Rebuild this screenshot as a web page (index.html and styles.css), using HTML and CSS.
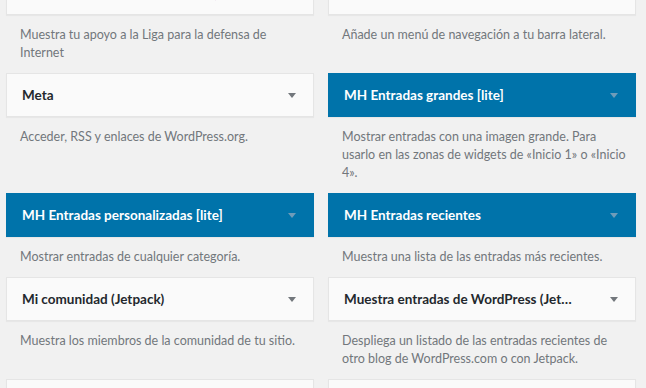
FILE: index.html
```html
<!doctype html>
<html>
	<head>
		<meta charset="utf-8">
		<link rel="stylesheet" href="styles.css">
	</head>
	<body>
		<div id="widget-list">
			<div class="widget">
				<div class="widget-top">
					<h3 class="widget-title">Liga para la defensa de Internet (Jetpack)</h3>
					<span class="widget-arrow"></span>
				</div>
				<p class="widget-description">Muestra tu apoyo a la Liga para la defensa de Internet</p>
			</div>
			<div class="widget">
				<div class="widget-top">
					<h3 class="widget-title">Menú de navegación</h3>
					<span class="widget-arrow"></span>
				</div>
				<p class="widget-description">Añade un menú de navegación a tu barra lateral.</p>
			</div>
			<div class="widget">
				<div class="widget-top">
					<h3 class="widget-title">Meta</h3>
					<span class="widget-arrow"></span>
				</div>
				<p class="widget-description">Acceder, RSS y enlaces de WordPress.org.</p>
			</div>
			<div class="widget">
				<div class="widget-top theme">
					<h3 class="widget-title">MH Entradas grandes [lite]</h3>
					<span class="widget-arrow"></span>
				</div>
				<p class="widget-description">Mostrar entradas con una imagen grande. Para usarlo en las zonas de widgets de «Inicio 1» o «Inicio 4».</p>
			</div>
			<div class="widget">
				<div class="widget-top theme">
					<h3 class="widget-title">MH Entradas personalizadas [lite]</h3>
					<span class="widget-arrow"></span>
				</div>
				<p class="widget-description">Mostrar entradas de cualquier categoría.</p>
			</div>
			<div class="widget">
				<div class="widget-top theme">
					<h3 class="widget-title">MH Entradas recientes</h3>
					<span class="widget-arrow"></span>
				</div>
				<p class="widget-description">Muestra una lista de las entradas más recientes.</p>
			</div>
			<div class="widget">
				<div class="widget-top">
					<h3 class="widget-title">Mi comunidad (Jetpack)</h3>
					<span class="widget-arrow"></span>
				</div>
				<p class="widget-description">Muestra los miembros de la comunidad de tu sitio.</p>
			</div>
			<div class="widget">
				<div class="widget-top">
					<h3 class="widget-title">Muestra entradas de WordPress (Jetpack)</h3>
					<span class="widget-arrow"></span>
				</div>
				<p class="widget-description">Despliega un listado de las entradas recientes de otro blog de WordPress.com o con Jetpack.</p>
			</div>
			<div class="widget">
				<div class="widget-top">
					<h3 class="widget-title">Navegación de entradas</h3>
					<span class="widget-arrow"></span>
				</div>
				<p class="widget-description">Enlaces a las entradas anterior y siguiente.</p>
			</div>
			<div class="widget">
				<div class="widget-top">
					<h3 class="widget-title">Páginas</h3>
					<span class="widget-arrow"></span>
				</div>
				<p class="widget-description">Una lista de las páginas de tu sitio.</p>
			</div>
		</div>
	</body>
</html>
```

FILE: styles.css
```css
* {
	margin: 0;
	padding: 0;
	box-sizing: border-box;
}
html, body {
	height: 100%;
	overflow: hidden;
}
body {
	background: #f1f1f1;
	font-family: Lato, "Open Sans", sans-serif;
	font-size: 12.5px;
	color: #23282d;
}
#widget-list {
	display: grid;
	grid-template-columns: 308px 308px;
	column-gap: 14px;
	margin-top: -29px;
	padding-left: 6px;
}
.widget-top {
	display: flex;
	align-items: center;
	height: 44px;
	padding: 0 15px;
	background: #fafafa;
	border: 1px solid #e5e5e5;
	box-shadow: 0 1px 1px rgba(0, 0, 0, 0.04);
}
.widget-top.theme {
	background: #0073aa;
	border-color: #0073aa;
	color: #fff;
}
.widget-title {
	flex: 1;
	font-size: 13.5px;
	font-weight: 700;
	line-height: 20px;
	white-space: nowrap;
	overflow: hidden;
	text-overflow: ellipsis;
	padding-right: 32px;
}
.widget-arrow {
	width: 0;
	height: 0;
	margin-right: 2px;
	border-left: 4px solid transparent;
	border-right: 4px solid transparent;
	border-top: 5px solid #72777c;
}
.theme .widget-arrow {
	border-top-color: #6f9cb9;
}
.widget-description {
	padding: 11px 9px 11px 14px;
	line-height: 18px;
	color: #72777c;
}
```
